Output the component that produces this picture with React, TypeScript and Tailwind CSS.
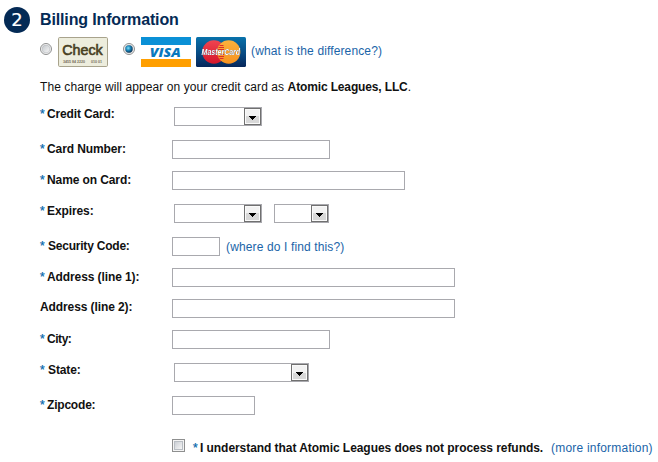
import type { ReactNode } from "react";

function Select({ className }: { className: string }) {
  return (
    <button
      type="button"
      aria-label="Select"
      className={`flex h-[19px] justify-end border border-[#a9a9ae] bg-white ${className}`}
    >
      <span className="flex h-[17px] w-[17px] items-center justify-center border border-[#707070] bg-linear-to-b from-[#f2f2f2] from-50% to-[#d8d8d8] to-50% shadow-[inset_0_0_0_1px_#fafafa]">
        <svg width="7" height="4" viewBox="0 0 7 4" shapeRendering="crispEdges" className="relative top-px">
          <path d="M0 0h7v1H6v1H5v1H4v1H3V3H2V2H1V1H0z" fill="#000" />
        </svg>
      </span>
    </button>
  );
}

function Input({ className, label }: { className: string; label: string }) {
  return <input aria-label={label} className={`block h-[19px] border border-[#a9a9ae] bg-white outline-none ${className}`} />;
}

function Star({ className = "" }: { className?: string }) {
  return <span className={`inline-block w-[7px] font-normal text-[#0a69ad] [-webkit-text-stroke:0.25px_#0a69ad] ${className}`}>*</span>;
}

function Row({
  label,
  height,
  shift = "pt-[2px]",
  tracking = "tracking-[-0.1px]",
  starred = true,
  gap = "",
  children,
}: {
  label: string;
  height: string;
  shift?: string;
  tracking?: string;
  starred?: boolean;
  gap?: string;
  children: ReactNode;
}) {
  return (
    <div className={`flex items-start ${height}`}>
      <label className={`flex w-[132px] shrink-0 font-bold ${shift}`}>
        {starred && <Star className={gap} />}
        <span className={`whitespace-nowrap ${tracking}`}>{label}</span>
      </label>
      {children}
    </div>
  );
}

function Radio({ checked = false }: { checked?: boolean }) {
  return (
    <svg width="12" height="12" viewBox="0 0 12 12" className="shrink-0">
      <defs>
        <linearGradient id="radioFace" x1="0" y1="0" x2="1" y2="1">
          <stop offset="0" stopColor="#c3c7cb" />
          <stop offset="1" stopColor="#f8f8f8" />
        </linearGradient>
        <radialGradient id="radioDot" cx="0.4" cy="0.38" r="0.65">
          <stop offset="0" stopColor="#7fe0fa" />
          <stop offset="0.5" stopColor="#1681b5" />
          <stop offset="1" stopColor="#0b2f50" />
        </radialGradient>
      </defs>
      <circle cx="6" cy="6" r="5.5" fill="#f4f4f4" stroke="#8e8f8f" />
      <circle cx="6" cy="6" r="3.9" fill="url(#radioFace)" stroke="#b5b9bd" strokeWidth="0.6" />
      {checked && <circle cx="6" cy="6" r="3.7" fill="url(#radioDot)" />}
    </svg>
  );
}

function CheckLogo() {
  return (
    <svg width="50" height="30" viewBox="0 0 50 30" className="shrink-0">
      <rect x="0.5" y="0.5" width="49" height="29" rx="1.2" fill="#ededdd" stroke="#a8a38c" />
      <text x="4.2" y="18" fontFamily="'Liberation Sans', Arial, sans-serif" fontSize="14" fill="#48401f" stroke="#48401f" strokeWidth="0.6" textLength="40.5" lengthAdjust="spacingAndGlyphs">Check</text>
      <text x="5" y="26.2" fontFamily="'Liberation Sans', Arial, sans-serif" fontSize="4" fontWeight="bold" fill="#77715a" textLength="22" lengthAdjust="spacingAndGlyphs">3455 84 2220</text>
      <text x="33" y="26.2" fontFamily="'Liberation Sans', Arial, sans-serif" fontSize="4" fontWeight="bold" fill="#77715a" textLength="11" lengthAdjust="spacingAndGlyphs">010 01</text>
    </svg>
  );
}

function VisaLogo() {
  return (
    <svg width="50" height="30" viewBox="0 0 50 30" className="shrink-0">
      <rect width="50" height="30" fill="#fff" />
      <rect width="50" height="8" fill="#0a90d6" />
      <rect y="22" width="50" height="8" fill="#ff9f00" />
      <text x="8.8" y="19.7" fontFamily="'Open Sans', 'Liberation Sans', sans-serif" fontSize="13" fontWeight="800" fontStyle="italic" fill="#0878be" textLength="31" lengthAdjust="spacingAndGlyphs">VISA</text>
    </svg>
  );
}

function MasterCardLogo() {
  return (
    <svg width="50" height="30" viewBox="0 0 50 30" className="shrink-0">
      <defs>
        <linearGradient id="mcBack" x1="0" y1="0" x2="0" y2="1">
          <stop offset="0" stopColor="#0872ab" />
          <stop offset="0.55" stopColor="#084a82" />
          <stop offset="1" stopColor="#06265a" />
        </linearGradient>
        <linearGradient id="mcRed" x1="0" y1="0" x2="0" y2="1">
          <stop offset="0" stopColor="#f04450" />
          <stop offset="1" stopColor="#d5172b" />
        </linearGradient>
        <linearGradient id="mcGold" x1="0" y1="0" x2="0" y2="1">
          <stop offset="0" stopColor="#fcb13c" />
          <stop offset="1" stopColor="#f6921f" />
        </linearGradient>
      </defs>
      <rect width="50" height="30" rx="1.5" fill="url(#mcBack)" />
      <circle cx="17.9" cy="15" r="11.7" fill="url(#mcRed)" />
      <circle cx="32.7" cy="15" r="11.7" fill="url(#mcGold)" />
      <path d="M23.5 8.5h4M22.5 10.5h5.5M22 12.5h6M22 17.5h6M22.5 19.5h5.5M23.5 21.5h4" stroke="#dc2d2c" />
      <text x="5.6" y="18" fontFamily="'Liberation Sans', Arial, sans-serif" fontSize="8.6" fontWeight="bold" fontStyle="italic" fill="#fff" textLength="38.5" lengthAdjust="spacingAndGlyphs" className="drop-shadow-[0.6px_0.6px_0.4px_#26375b]">MasterCard</text>
    </svg>
  );
}

export default function App() {
  return (
    <main className="h-[462px] w-[658px] overflow-hidden bg-white pl-1 font-['Liberation_Sans',Arial,sans-serif] text-[12px] leading-[14px] text-[#111]">
      <header className="flex h-[37px] items-start pt-[7px]">
        <span className="flex size-[26px] items-center justify-center rounded-full bg-[#042a55] font-['DejaVu_Sans',sans-serif] text-[18px] leading-none text-white [-webkit-text-stroke:0.2px_white]">2</span>
        <h1 className="ml-[10px] mt-[4px] whitespace-nowrap text-[16px] leading-[18px] font-bold tracking-[-0.14px] text-[#042a55]">Billing Information</h1>
      </header>
      <div className="pl-9">
        <div className="flex h-[43px] items-start">
          <div className="pt-[6px]"><Radio /></div>
          <div className="ml-[6px]"><CheckLogo /></div>
          <div className="ml-[15px] pt-[6px]"><Radio checked /></div>
          <div className="ml-[6px] flex gap-[5px]"><VisaLogo /><MasterCardLogo /></div>
          <a className="ml-[5px] mt-[7px] whitespace-nowrap tracking-[0.13px] text-[#1a64a8]">(what is the difference?)</a>
        </div>
        <p className="h-[27px] whitespace-nowrap">
          <span className="tracking-[0.09px]">The charge will appear on your credit card as </span><b className="tracking-[-0.14px]">Atomic Leagues, LLC</b>.
        </p>
        <form>
          <Row label="Credit Card:" height="h-[33px]" shift="" tracking="tracking-[-0.14px]"><Select className="ml-[2px] w-[88px]" /></Row>
          <Row label="Card Number:" height="h-[31px]"><Input label="Card Number" className="w-[158px]" /></Row>
          <Row label="Name on Card:" height="h-[33px]"><Input label="Name on Card" className="w-[233px]" /></Row>
          <Row label="Expires:" height="h-[33px]" shift="">
            <Select className="ml-[2px] w-[88px]" />
            <Select className="ml-3 w-[55px]" />
          </Row>
          <Row label="Security Code:" height="h-[31px]" gap="mr-px" tracking="tracking-[-0.22px]">
            <Input label="Security Code" className="w-[48px]" />
            <a className="ml-[6px] mt-[3px] whitespace-nowrap tracking-[0.13px] text-[#1a64a8]">(where do I find this?)</a>
          </Row>
          <Row label="Address (line 1):" height="h-[31px]"><Input label="Address line 1" className="w-[283px]" /></Row>
          <Row label="Address (line 2):" height="h-[31px]" shift="pt-px" starred={false}><Input label="Address line 2" className="w-[283px]" /></Row>
          <Row label="City:" height="h-[33px]" tracking="tracking-[-0.45px]"><Input label="City" className="w-[158px]" /></Row>
          <Row label="State:" height="h-[33px]" shift="" gap="mr-px"><Select className="ml-[2px] w-[135px]" /></Row>
          <Row label="Zipcode:" height="h-[43px]" tracking="tracking-[-0.2px]"><Input label="Zipcode" className="w-[83px]" /></Row>
          <div className="flex items-start pl-[132px]">
            <span role="checkbox" aria-checked="false" className="size-[13px] shrink-0 border border-[#8e8f8f] bg-[#f4f4f4] p-px">
              <span className="block size-[9px] border border-[#b9bec4] bg-linear-to-br from-[#cbcfd5] to-[#f6f6f6]" />
            </span>
            <span className="ml-2 mt-[2px] flex whitespace-nowrap font-bold"><Star /><span className="tracking-[-0.055px]">I understand that Atomic Leagues does not process refunds.</span></span>
            <a className="ml-2 mt-[2px] whitespace-nowrap tracking-[0.2px] text-[#1a64a8]">(more information)</a>
          </div>
        </form>
      </div>
    </main>
  );
}
